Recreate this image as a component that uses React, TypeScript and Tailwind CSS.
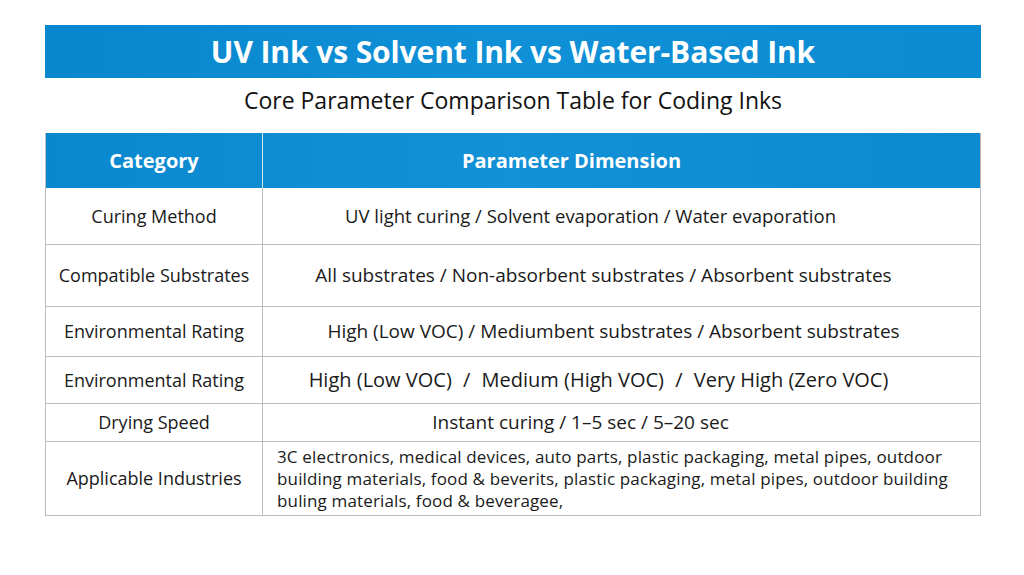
import React from "react";

const Sl = () => <span className="mx-[6px]">/</span>;

const rows: { cat: string; val: React.ReactNode; h: string; cls: string }[] = [
  { cat: "Curing Method", val: "UV light curing / Solvent evaporation / Water evaporation", h: "h-[57px]", cls: "pr-[62px] text-[18.5px]" },
  { cat: "Compatible Substrates", val: "All substrates / Non-absorbent substrates / Absorbent substrates", h: "h-[62px]", cls: "pr-[36px] text-[19px]" },
  { cat: "Environmental Rating", val: "High (Low VOC) / Mediumbent substrates / Absorbent substrates", h: "h-[50px]", cls: "pr-[16px] text-[19px]" },
  {
    cat: "Environmental Rating",
    val: (
      <span className="whitespace-nowrap">
        High (Low VOC) <Sl /> Medium (High VOC) <Sl /> Very High (Zero VOC)
      </span>
    ),
    h: "h-[47px]",
    cls: "pr-[46px] text-[20px]",
  },
  { cat: "Drying Speed", val: "Instant curing / 1–5 sec / 5–20 sec", h: "h-[38px]", cls: "pr-[82px] text-[19px]" },
];

export default function App() {
  return (
    <div className="w-[1024px] h-[575px] bg-white overflow-hidden" style={{ fontFamily: '"Open Sans", "Noto Sans", sans-serif' }}>
      <div className="pt-[25px] px-[45px] w-[1026px]">
        <div className="h-[53px] bg-gradient-to-r from-[#0887cf] via-[#1090d6] to-[#0a8bd2] flex items-center justify-center">
          <h1 className="text-white font-bold text-[30px] tracking-[-0.1px] leading-none">UV Ink vs Solvent Ink vs Water-Based Ink</h1>
        </div>
        <div className="h-[55px] pb-[10px] flex items-center justify-center">
          <p className="text-[#111] text-[23px] leading-none">Core Parameter Comparison Table for Coding Inks</p>
        </div>
        <div className="border border-[#bdbdbd] border-t-0 text-[#1a1a1a]">
          <div className="flex h-[55px] bg-gradient-to-r from-[#0a88cf] via-[#1391d6] to-[#0b8ad1] text-white font-bold text-[20px]">
            <div className="w-[217px] flex items-center justify-center border-r border-[#d8e8f3]">Category</div>
            <div className="flex-1 flex items-center justify-center pr-[100px]">Parameter Dimension</div>
          </div>
          {rows.map((r, i) => (
            <div key={i} className={`flex ${r.h} border-b border-[#bdbdbd]`}>
              <div className="w-[217px] flex items-center justify-center border-r border-[#bdbdbd] text-[18px]">{r.cat}</div>
              <div className={`flex-1 flex items-center justify-center ${r.cls}`}>{r.val}</div>
            </div>
          ))}
          <div className="flex h-[73px]">
            <div className="w-[217px] flex items-center justify-center border-r border-[#bdbdbd] text-[18px]">Applicable Industries</div>
            <div className="flex-1 flex flex-col justify-center pl-[14px] text-[17px] leading-[22px] tracking-[0.15px]">
              <span className="whitespace-nowrap">3C electronics, medical devices, auto parts, plastic packaging, metal pipes, outdoor</span>
              <span className="whitespace-nowrap">building materials, food &amp; beverits, plastic packaging, metal pipes, outdoor building</span>
              <span className="whitespace-nowrap">buling materials, food &amp; beverageе,</span>
            </div>
          </div>
        </div>
      </div>
    </div>
  );
}
